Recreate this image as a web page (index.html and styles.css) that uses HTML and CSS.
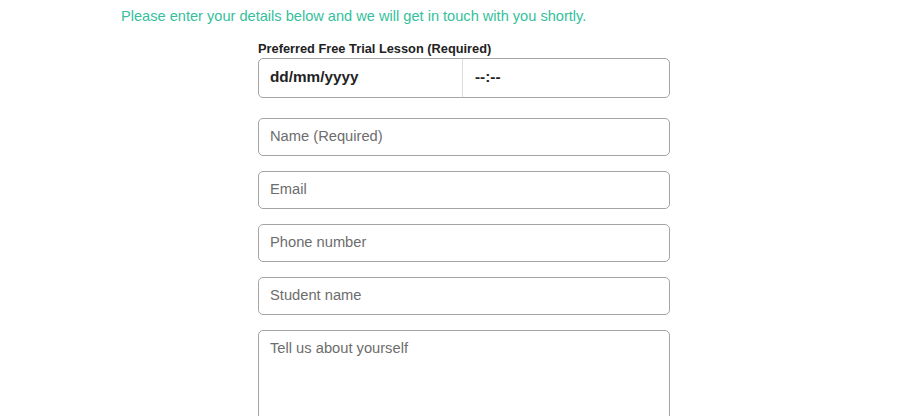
FILE: index.html
```html
<!DOCTYPE html>
<html lang="en">
<head>
  <meta charset="UTF-8" />
  <meta name="viewport" content="width=device-width, initial-scale=1.0" />
  <title>Free Trial Lesson</title>
  <link rel="stylesheet" href="styles.css">
</head>
<body>
  <div class="page">
    <p class="intro">Please enter your details below and we will get in touch with you shortly.</p>

    <form class="trial-form" id="trialForm">
      <label class="field-label">Preferred Free Trial Lesson (Required)</label>
      <div class="datetime-box">
        <div class="date-part">dd/mm/yyyy</div>
        <div class="time-part">--:--</div>
      </div>

      <input type="text" name="name" placeholder="Name (Required)" />
      <input type="email" name="email" placeholder="Email" />
      <input type="tel" name="phone" placeholder="Phone number" />
      <input type="text" name="student" placeholder="Student name" />
      <textarea name="about" placeholder="Tell us about yourself" rows="6"></textarea>
    </form>
  </div>
</body>
</html>
```

FILE: styles.css
```css
body {
  font-family: Arial, "Liberation Sans", sans-serif;
  margin: 0;
  background-color: #ffffff;
  overflow: hidden;
}

.page {
  width: 686px;
  margin-left: 121px;
  padding-top: 7px;
}

.intro {
  margin: 0;
  font-size: 14.6px;
  line-height: 18px;
  color: #35bf9c;
}

.trial-form {
  width: 412px;
  margin: 0 auto;
  padding-top: 17px;
  display: flex;
  flex-direction: column;
}

.field-label {
  font-size: 12.8px;
  font-weight: bold;
  color: #222;
  line-height: 14px;
  margin-bottom: 2px;
}

.datetime-box {
  display: flex;
  height: 40px;
  border: 1px solid #a5a5a5;
  border-radius: 5px;
  box-sizing: border-box;
  margin-bottom: 20px;
}

.date-part, .time-part {
  font-size: 15.3px;
  font-weight: bold;
  line-height: 17px;
  color: #222;
  padding: 9px 0 0 11px;
}

.date-part {
  width: 204px;
  border-right: 1px solid #dcdcdc;
  box-sizing: border-box;
}

.time-part {
  flex: 1;
  padding-left: 12px;
}

input, textarea {
  width: 100%;
  height: 38px;
  margin: 0 0 15px 0;
  padding: 8px 11px 11px;
  font-family: Arial, "Liberation Sans", sans-serif;
  font-size: 14.7px;
  line-height: 17px;
  color: #333;
  border: 1px solid #a5a5a5;
  border-radius: 5px;
  box-sizing: border-box;
  outline: none;
}

input::placeholder, textarea::placeholder {
  color: #6d6d6d;
}

textarea {
  height: 120px;
  padding-top: 9px;
  resize: vertical;
}
```
